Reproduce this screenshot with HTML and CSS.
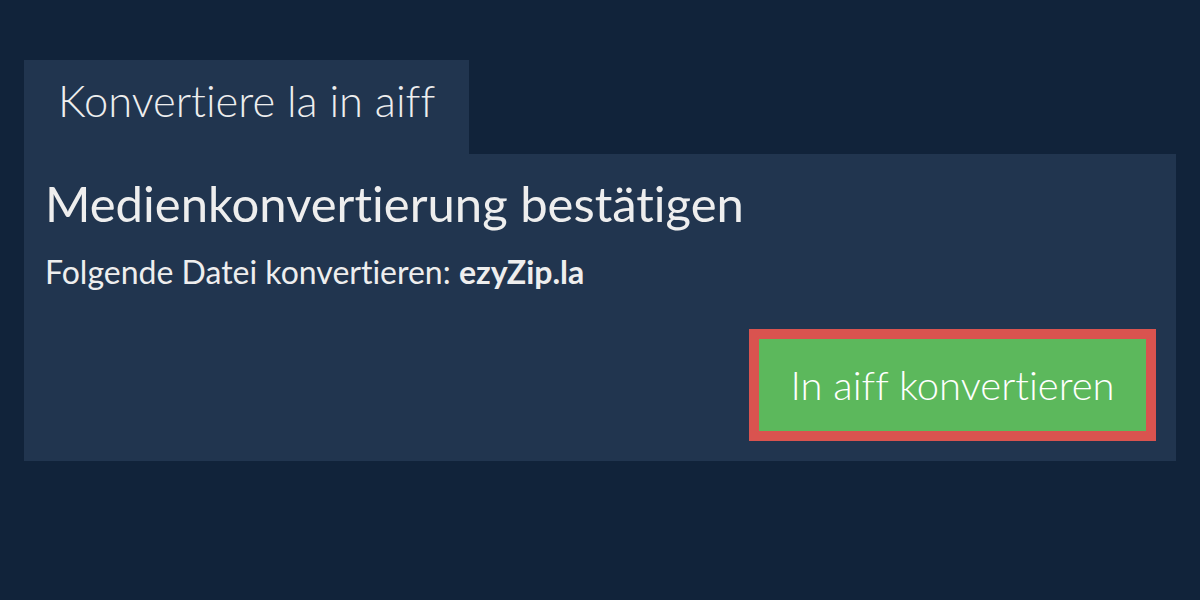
FILE: index.html
```html
<!DOCTYPE html>
<html lang="de">
  <head>
    <meta charset="UTF-8" />
    <meta name="viewport" content="width=device-width, initial-scale=1.0" />
    <title>Konvertiere la in aiff</title>
    <link rel="stylesheet" href="styles.css">
  </head>
  <body>
    <div class="converter">
      <div class="tab">Konvertiere la in aiff</div>
      <div class="panel">
        <h1>Medienkonvertierung bestätigen</h1>
        <p class="file-line">Folgende Datei konvertieren: <strong>ezyZip.la</strong></p>
        <div class="actions">
          <button class="convert-btn">In aiff konvertieren</button>
        </div>
      </div>
    </div>
  </body>
</html>
```

FILE: styles.css
```css
/* Page */
body {
  margin: 0;
  background: #11233a;
  font-family: Lato, "Open Sans", sans-serif;
  font-variant-ligatures: none;
  font-feature-settings: "liga" 0, "calt" 0, "dlig" 0;
  color: #eeeeee;
}

.converter {
  padding: 60px 24px;
}

/* Tab on top */
.tab {
  display: inline-block;
  background: #21354f;
  height: 94px;
  line-height: 80px;
  padding: 0 34px;
  font-size: 43.5px;
  font-weight: 300;
}

/* Panel */
.panel {
  background: #21354f;
  padding: 20px 20px 20px 21px;
}

.panel h1 {
  margin: 0;
  font-size: 49px;
  font-weight: 400;
  line-height: 58px;
}

.file-line {
  margin: 20px 0 0;
  font-size: 32px;
  font-weight: 400;
  line-height: 40px;
}

.file-line strong {
  font-weight: 700;
}

.actions {
  display: flex;
  justify-content: flex-end;
  margin-top: 37px;
}

.convert-btn {
  background: #5cb85c;
  color: #ffffff;
  border: 10px solid #d9534f;
  width: 407px;
  height: 112px;
  font-family: inherit;
  font-size: 40px;
  font-weight: 300;
  font-feature-settings: inherit;
  cursor: pointer;
}
```
